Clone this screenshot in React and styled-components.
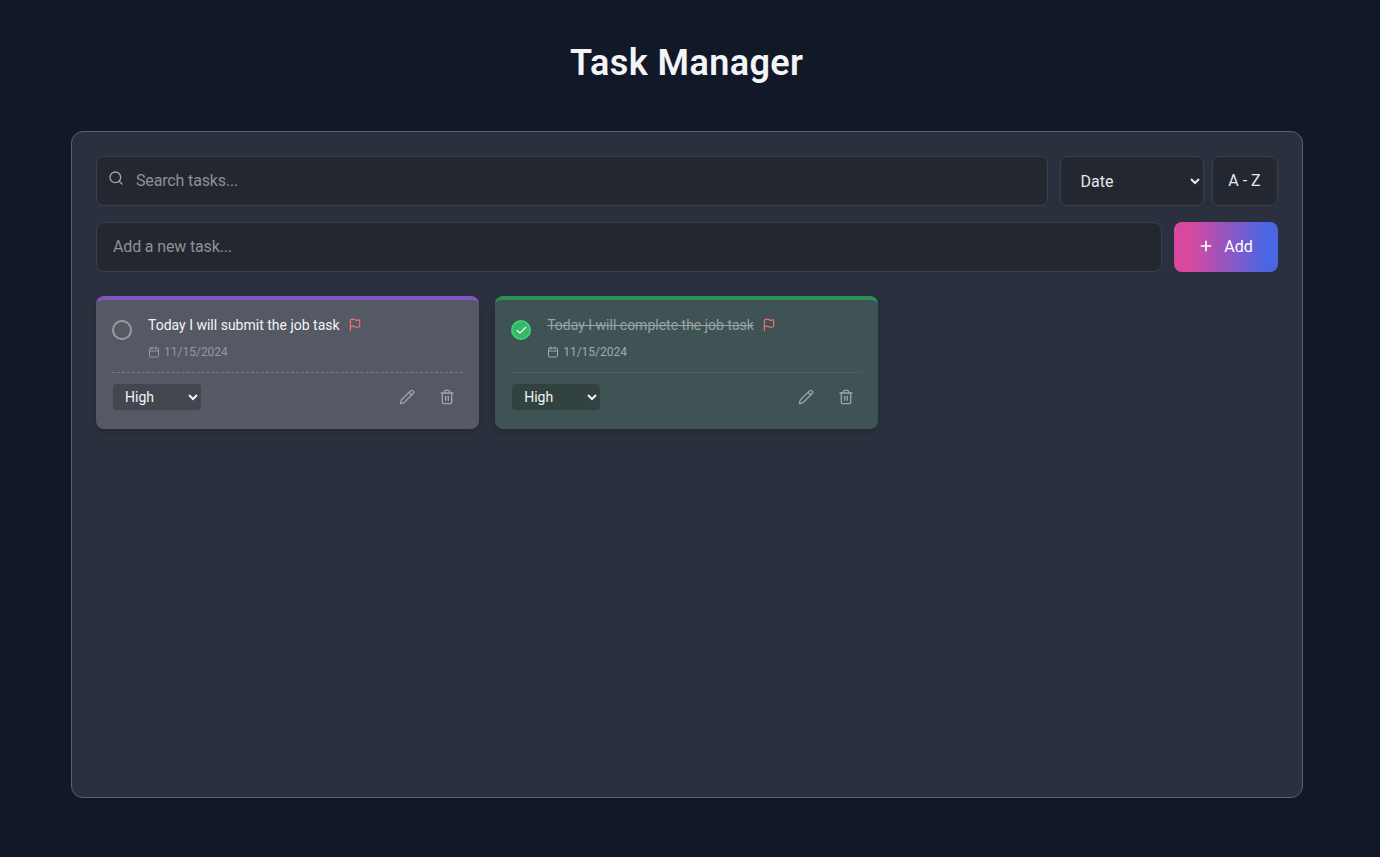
import styled, { createGlobalStyle } from 'styled-components';
import { Search, Plus, Flag, Calendar, Pencil, Trash2, Check } from 'lucide-react';

const GlobalStyle = createGlobalStyle`
	* {
		box-sizing: border-box;
	}
	html, body {
		margin: 0;
		min-height: 100%;
	}
	body {
		background: #111827;
		color: #fff;
		font-family: Roboto, "Noto Sans", sans-serif;
	}
	input::placeholder {
		color: #8e9198;
		opacity: 1;
	}
`

const Page = styled.div`
	height: 857px;
	padding: 40px 77.5px 59px 71px;
	display: flex;
	flex-direction: column;
`

const Title = styled.h1`
	margin: 0 0 44px;
	height: 47px;
	line-height: 46px;
	font-size: 36px;
	font-weight: 600;
	letter-spacing: 0.4px;
	text-align: center;
	color: #f3f4f6;
`

const Panel = styled.main`
	flex: 1;
	background: #2a303d;
	border: 1px solid #596170;
	border-radius: 12px;
	padding: 24px;
`

const Row = styled.div`
	display: flex;
	margin-bottom: 16px;
`

const fieldBox = `
	height: 50px;
	background: #23272f;
	border: 1px solid #393f4c;
	border-radius: 8px;
	color: #e5e7eb;
	font-family: inherit;
	font-size: 16px;
	outline: none;
`

const SearchBox = styled.div`
	position: relative;
	flex: 1;
	margin-right: 12px;
	svg {
		position: absolute;
		left: 12px;
		top: 14px;
		color: #a2a6ae;
	}
`

const Input = styled.input`
	${fieldBox}
	display: block;
	flex: 1;
	width: 100%;
	min-width: 0;
	padding: 0 16px 2px ${p => p.$indent || 16}px;
	letter-spacing: -0.15px;
`

const SortSelect = styled.select`
	${fieldBox}
	flex: none;
	width: 144px;
	padding: 0 0 0 16px;
	margin-right: 8px;
`

const SortButton = styled.button`
	${fieldBox}
	flex: none;
	width: 66px;
	padding: 0 0 2px;
	cursor: pointer;
`

const AddButton = styled.button`
	flex: none;
	width: 104px;
	height: 50px;
	margin-left: 12px;
	padding: 0 0 2px;
	border: none;
	border-radius: 8px;
	background: linear-gradient(90deg, #d9489f 15%, #4a66e3 88%);
	color: #fff;
	font-family: inherit;
	font-size: 16px;
	display: flex;
	align-items: center;
	justify-content: center;
	gap: 10px;
	cursor: pointer;
`

const TaskGrid = styled.div`
	display: grid;
	grid-template-columns: repeat(3, 1fr);
	gap: 16px;
	margin-top: 24px;
`

const Card = styled.article`
	height: 133px;
	padding: 16px;
	border-top: 4px solid ${p => (p.$done ? '#2f8f58' : '#7e57c2')};
	border-radius: 8px;
	background: ${p => (p.$done ? '#3f5355' : '#555964')};
	box-shadow: 0 4px 6px rgba(0, 0, 0, 0.12);
`

const CardHead = styled.div`
	display: flex;
	height: 57px;
	border-bottom: 1px ${p => (p.$done ? 'solid #535b60' : 'dashed #7b7e86')};
`

const Toggle = styled.span`
	flex: none;
	width: 20px;
	height: 20px;
	margin: 4px 16px 0 0;
	border-radius: 50%;
	border: 2px solid ${p => (p.$done ? '#3ecf74' : '#9a9ca3')};
	background: ${p => (p.$done ? '#36b868' : 'transparent')};
	display: flex;
	align-items: center;
	justify-content: center;
	color: #fff;
`

const TaskBody = styled.div`
	min-width: 0;
	margin-top: -1px;
`

const TaskLine = styled.div`
	display: flex;
	align-items: center;
	gap: 8px;
	height: 20px;
	font-size: 14px;
`

const TaskName = styled.span`
	color: ${p => (p.$done ? '#9ca1a6' : '#f3f4f6')};
	text-decoration: ${p => (p.$done ? 'line-through' : 'none')};
`

const DateLine = styled.div`
	display: flex;
	align-items: center;
	gap: 4px;
	margin-top: 9px;
	height: 16px;
	font-size: 12px;
	color: ${p => (p.$done ? '#a4a9ac' : '#9496a0')};
`

const CardFoot = styled.div`
	display: flex;
	align-items: center;
	justify-content: space-between;
	margin-top: 11px;
`

const PrioritySelect = styled.select`
	width: 88px;
	height: 26px;
	margin-left: 1px;
	padding: 0 0 0 8px;
	border: none;
	border-radius: 4px;
	background: ${p => (p.$done ? '#324241' : '#43464f')};
	color: #f3f4f6;
	font-family: inherit;
	font-size: 14px;
	outline: none;
`

const Actions = styled.div`
	display: flex;
	gap: 24px;
	margin-right: 8px;
	color: #9fa2a9;
	svg {
		display: block;
	}
`

const tasks = [
	{ id: 1, text: 'Today I will submit the job task', date: '11/15/2024', done: false },
	{ id: 2, text: 'Today I will complete the job task', date: '11/15/2024', done: true },
]

const App = () => {
	return (
		<Page>
			<GlobalStyle />
			<Title>Task Manager</Title>
			<Panel>
				<Row>
					<SearchBox>
						<Search size={16} />
						<Input $indent={39} placeholder="Search tasks..." />
					</SearchBox>
					<SortSelect defaultValue="date">
						<option value="date">Date</option>
						<option value="priority">Priority</option>
					</SortSelect>
					<SortButton>A - Z</SortButton>
				</Row>
				<Row>
					<Input placeholder="Add a new task..." />
					<AddButton><Plus size={16} strokeWidth={2.5} />Add</AddButton>
				</Row>
				<TaskGrid>
					{
						tasks.map(task => {
							return (
								<Card key={task.id} $done={task.done}>
									<CardHead $done={task.done}>
										<Toggle $done={task.done}>
											{task.done && <Check size={13} strokeWidth={2} />}
										</Toggle>
										<TaskBody>
											<TaskLine>
												<TaskName $done={task.done}>{task.text}</TaskName>
												<Flag size={14} color="#f87171" />
											</TaskLine>
											<DateLine $done={task.done}>
												<Calendar size={12} />
												{task.date}
											</DateLine>
										</TaskBody>
									</CardHead>
									<CardFoot>
										<PrioritySelect $done={task.done} defaultValue="high">
											<option value="high">High</option>
											<option value="low">Low</option>
										</PrioritySelect>
										<Actions>
											<Pencil size={16} />
											<Trash2 size={16} />
										</Actions>
									</CardFoot>
								</Card>
							)
						})
					}
				</TaskGrid>
			</Panel>
		</Page>
	)
}

export default App;
